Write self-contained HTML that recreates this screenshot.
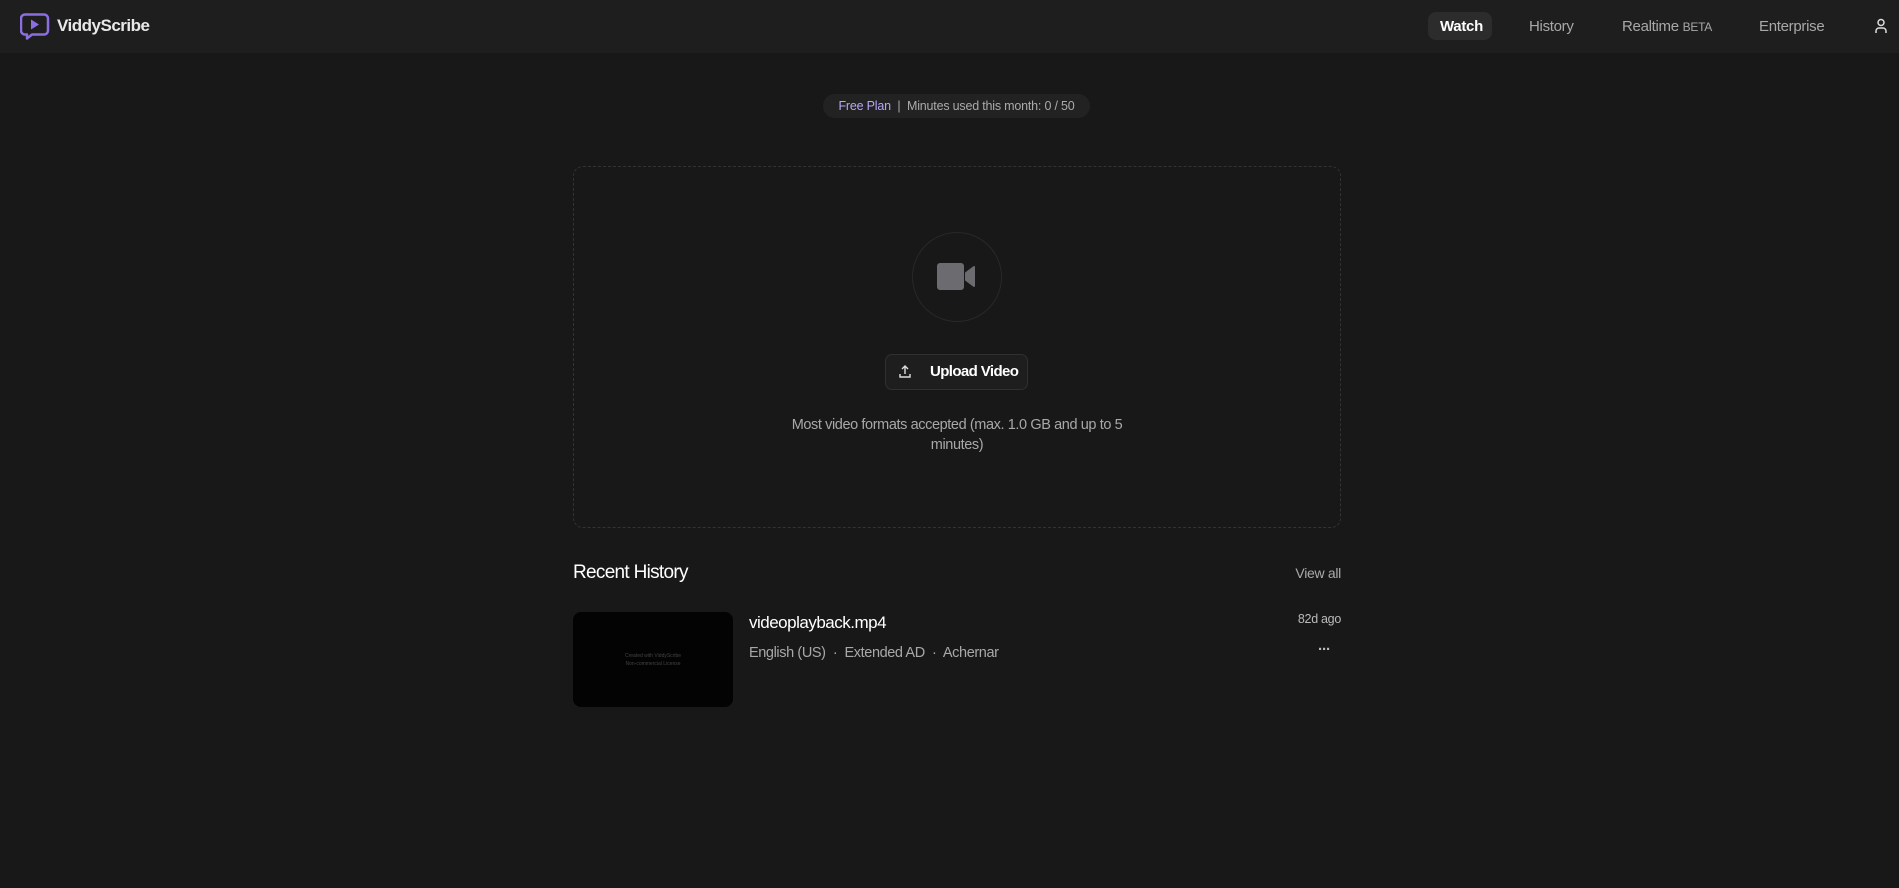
<!DOCTYPE html>
<html><head><meta charset="utf-8"><style>
*{margin:0;padding:0;box-sizing:border-box}
body{width:1899px;height:888px;background:#181818;font-family:"Liberation Sans",sans-serif;color:#fff;position:relative;overflow:hidden}
.hdr{position:absolute;left:0;top:0;width:1899px;height:53px;background:#1e1e1e}
.a{position:absolute;white-space:nowrap}
.nav{font-size:15px;color:#a8a8a8;top:18px;letter-spacing:-0.3px}
</style></head><body>
<div class="hdr"></div>
<svg class="a" style="left:20px;top:13px" width="30" height="27" viewBox="0 0 30 27"><path d="M5 1.5h19a4 4 0 0 1 4 4v12a4 4 0 0 1-4 4H12l-5 4v-4H5a4 4 0 0 1-4-4v-12a4 4 0 0 1 4-4z" fill="none" stroke="#8b6fe0" stroke-width="2.5" stroke-linejoin="round"/><path d="M11 6.5l8 5-8 5z" fill="#8b6fe0"/></svg>
<div class="a" style="left:57px;top:16px;font-size:17px;font-weight:bold;color:#e8e8e8;letter-spacing:-0.5px">ViddyScribe</div>
<div class="a" style="left:1428px;top:12px;width:64px;height:28px;background:#2c2c2c;border-radius:8px"></div>
<div class="a nav" style="left:1440px;color:#fff;font-weight:bold">Watch</div>
<div class="a nav" style="left:1529px">History</div>
<div class="a nav" style="left:1622px">Realtime <span style="font-size:12px">BETA</span></div>
<div class="a nav" style="left:1759px">Enterprise</div>
<svg class="a" style="left:1874px;top:18px" width="14" height="16" viewBox="0 0 14 16"><circle cx="7" cy="4.5" r="3" fill="none" stroke="#ddd" stroke-width="1.5"/><path d="M2 15v-2a3 3 0 0 1 3-3h4a3 3 0 0 1 3 3v2" fill="none" stroke="#ddd" stroke-width="1.5"/></svg>

<div class="a" style="left:823px;top:94px;width:267px;height:24px;background:#222;border-radius:12px;font-size:12.5px;line-height:24px;text-align:center;color:#aaa;letter-spacing:-0.2px"><span style="color:#b9a5f5">Free Plan</span>&nbsp;&nbsp;|&nbsp;&nbsp;Minutes used this month: 0 / 50</div>

<div class="a" style="left:573px;top:166px;width:768px;height:362px;border:1px dashed #333;border-radius:10px"></div>
<div class="a" style="left:912px;top:232px;width:90px;height:90px;border:1px solid #282828;border-radius:50%"></div>
<svg class="a" style="left:936px;top:262px" width="42" height="30" viewBox="0 0 42 30"><rect x="1" y="1" width="27" height="27" rx="3" fill="#6b6b70"/><path d="M30 11l8-6v19l-8-6z" fill="#6b6b70" stroke="#6b6b70" stroke-width="2" stroke-linejoin="round"/></svg>
<div class="a" style="left:885px;top:354px;width:143px;height:36px;background:#1e1e1e;border:1px solid #303030;border-radius:7px"></div>
<svg class="a" style="left:899px;top:365px" width="12" height="13" viewBox="0 0 12 13"><path d="M6 9V1M3 4l3-3 3 3M1 9v3h10V9" fill="none" stroke="#ddd" stroke-width="1.4"/></svg>
<div class="a" style="left:930px;top:363px;font-size:15px;font-weight:bold;color:#fff;letter-spacing:-0.6px">Upload Video</div>
<div class="a" style="left:757px;top:415px;width:400px;text-align:center;font-size:14.5px;line-height:20px;color:#a8a8a8;letter-spacing:-0.4px">Most video formats accepted (max. 1.0 GB and up to 5<br>minutes)</div>

<div class="a" style="left:573px;top:562px;font-size:19px;letter-spacing:-0.7px;color:#fff">Recent History</div>
<div class="a" style="left:1281px;top:565px;width:60px;text-align:right;font-size:14px;color:#aaa;letter-spacing:-0.3px">View all</div>
<div class="a" style="left:573px;top:612px;width:160px;height:95px;background:#030303;border-radius:8px;font-size:5px;color:#444;text-align:center;padding-top:40px;line-height:8px">Created with ViddyScribe<br>Non-commercial License</div>
<div class="a" style="left:749px;top:613px;font-size:17px;color:#fff;letter-spacing:-0.5px">videoplayback.mp4</div>
<div class="a" style="left:749px;top:645px;font-size:14.5px;color:#a8a8a8;letter-spacing:-0.4px">English (US) &nbsp;·&nbsp; Extended AD &nbsp;·&nbsp; Achernar</div>
<div class="a" style="left:1271px;top:612px;width:70px;text-align:right;font-size:12.5px;color:#bbb;letter-spacing:-0.3px">82d ago</div>
<div class="a" style="left:1318px;top:641px;font-size:15px;font-weight:bold;color:#bbb;letter-spacing:-1px">···</div>
</body></html>
